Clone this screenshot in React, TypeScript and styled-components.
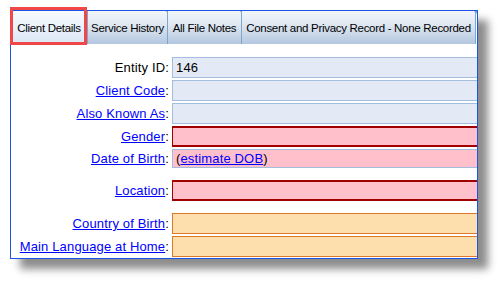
import styled, { createGlobalStyle } from 'styled-components';

const GlobalStyle = createGlobalStyle`
  html, body {
    margin: 0;
    padding: 0;
    background: #ffffff;
    font-family: 'Liberation Sans', Arial, sans-serif;
  }
`;

type Tone = 'plain' | 'required' | 'soft' | 'warn';

const tabs = [
  { label: 'Client Details', width: 77, active: true },
  { label: 'Service History', width: 80, active: false },
  { label: 'All File Notes', width: 74, active: false },
  { label: 'Consent and Privacy Record - None Recorded', width: 234, active: false },
];

const fields: { label: string; link: boolean; tone: Tone; gap: number; value?: string; dob?: boolean }[] = [
  { label: 'Entity ID', link: false, tone: 'plain', gap: 0, value: '146' },
  { label: 'Client Code', link: true, tone: 'plain', gap: 2 },
  { label: 'Also Known As', link: true, tone: 'plain', gap: 2 },
  { label: 'Gender', link: true, tone: 'required', gap: 2 },
  { label: 'Date of Birth', link: true, tone: 'soft', gap: 2, dob: true },
  { label: 'Location', link: true, tone: 'required', gap: 12 },
  { label: 'Country of Birth', link: true, tone: 'warn', gap: 12 },
  { label: 'Main Language at Home', link: true, tone: 'warn', gap: 2 },
];

const toneFill: Record<Tone, string> = {
  plain: '#e3eaf6',
  required: '#ffc0cb',
  soft: '#ffc0cb',
  warn: '#fddead',
};

const toneBorder: Record<Tone, string> = {
  plain: '#a3bedd',
  required: '#a00000',
  soft: '#a3bedd',
  warn: '#e0782a',
};

const App = () => {
  return (
    <>
      <GlobalStyle />
      <Page>
        <Window>
          <TabBar>
            {tabs.map((t) => (
              <Tab key={t.label} $width={t.width} $active={t.active}>
                {t.label}
              </Tab>
            ))}
          </TabBar>
          <Form>
            {fields.map((f) => (
              <Row key={f.label} $gap={f.gap} $tall={!f.dob}>
                <Label>
                  {f.link ? <LabelLink href="#">{f.label}</LabelLink> : f.label}:
                </Label>
                <Field $tone={f.tone}>
                  {f.value}
                  {f.dob && (
                    <>
                      (<LabelLink href="#">estimate DOB</LabelLink>)
                    </>
                  )}
                </Field>
              </Row>
            ))}
          </Form>
        </Window>
        <Highlight />
      </Page>
    </>
  );
};

const Page = styled.div`
  position: relative;
  width: 504px;
  height: 285px;
  padding: 10px 0 0 10px;
  box-sizing: border-box;
`;

const Window = styled.div`
  width: 468px;
  height: 249px;
  box-sizing: border-box;
  border: 1px solid #1b55e6;
  background: #ffffff;
  box-shadow: 10px 10px 8px rgba(0, 0, 0, 0.45);
  overflow: hidden;
`;

const TabBar = styled.div`
  display: flex;
  height: 33px;
  background: #ffffff;
`;

const Tab = styled.div<{ $width: number; $active: boolean }>`
  position: relative;
  width: ${({ $width }) => $width}px;
  flex: none;
  box-sizing: border-box;
  display: flex;
  align-items: center;
  justify-content: center;
  font-size: 11.5px;
  letter-spacing: -0.3px;
  white-space: nowrap;
  color: #000000;
  border-right: 1px solid #7ea7c9;
  background: ${({ $active }) =>
    $active
      ? 'linear-gradient(#f8fbff, #dbe7f5)'
      : 'linear-gradient(#f3f6fb 0%, #dde6f1 45%, #b3c7df 100%)'};

  &::after {
    content: '';
    position: absolute;
    top: 0;
    right: -3px;
    border-left: 2px solid transparent;
    border-right: 2px solid transparent;
    border-top: 3px solid #7ea7c9;
  }
`;

const Form = styled.div`
  display: flex;
  flex-direction: column;
  padding-top: 13px;
`;

const Row = styled.div<{ $gap: number; $tall: boolean }>`
  display: grid;
  grid-template-columns: 158px 1fr;
  column-gap: 3px;
  align-items: stretch;
  height: ${({ $tall }) => ($tall ? 21 : 19)}px;
  margin-top: ${({ $gap }) => $gap}px;
`;

const Label = styled.div`
  display: flex;
  align-items: center;
  justify-content: flex-end;
  font-size: 13px;
  letter-spacing: 0.15px;
  color: #000000;
  white-space: nowrap;
`;

const LabelLink = styled.a`
  color: #0000ff;
  text-decoration: underline;
`;

const Field = styled.div<{ $tone: Tone }>`
  box-sizing: border-box;
  display: flex;
  align-items: center;
  padding-left: 3px;
  font-size: 13px;
  letter-spacing: 0.15px;
  background: ${({ $tone }) => toneFill[$tone]};
  border: 1px solid ${({ $tone }) => toneBorder[$tone]};
  border-right: none;
  ${({ $tone }) => ($tone === 'required' ? 'border-width: 2px 0 2px 1px;' : '')}
`;

const Highlight = styled.div`
  position: absolute;
  left: 10px;
  top: 7px;
  width: 77px;
  height: 38px;
  box-sizing: border-box;
  border: 3px solid #f04848;
  pointer-events: none;
`;

export default App;
